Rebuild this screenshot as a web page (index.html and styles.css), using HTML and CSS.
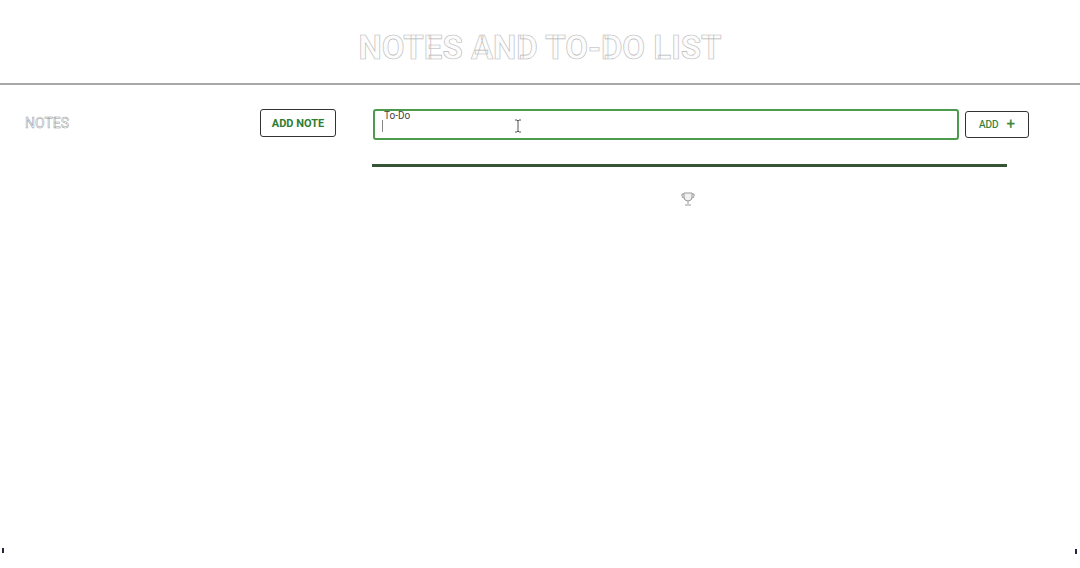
FILE: index.html
```html
<!DOCTYPE html>
<html lang="en">
<head>
<meta charset="utf-8">
<title>Notes and To-Do List</title>
<link rel="stylesheet" href="styles.css">
</head>
<body>
<header class="header">
  <h1 class="title">NOTES AND TO-DO LIST</h1>
</header>
<main class="main">
  <section class="notes">
    <div class="notes-head">
      <span class="notes-label">NOTES</span>
      <button class="btn btn-note">ADD NOTE</button>
    </div>
  </section>
  <section class="todo">
    <div class="todo-row">
      <div class="field">
        <span class="field-label">To-Do</span>
        <span class="caret"></span>
        <svg class="ibeam" width="8" height="14" viewBox="0 0 8 14"><path d="M1 1h2l1 1 1-1h2M4 2v10M1 13h2l1-1 1 1h2" fill="none" stroke="#555" stroke-width="1"/></svg>
      </div>
      <button class="btn btn-add">ADD <span class="plus">+</span></button>
    </div>
    <div class="bar"></div>
    <div class="trophy">
      <svg width="16" height="16" viewBox="0 0 16 16"><path d="M4 2h8v4a4 4 0 0 1-8 0zM4 3H2v2a2 2 0 0 0 2 2M12 3h2v2a2 2 0 0 1-2 2M8 10v3M5 14h6" fill="#f2f2f2" stroke="#9a9a9a" stroke-width="1"/></svg>
    </div>
  </section>
</main>
<span class="corner corner-l"></span>
<span class="corner corner-r"></span>
</body>
</html>
```
FILE: styles.css
```css
html, body {
  margin: 0;
  padding: 0;
  background: #fff;
  font-family: Roboto, "Liberation Sans", Arial, sans-serif;
  height: 568px;
  overflow: hidden;
  position: relative;
}
.header {
  height: 83px;
  display: flex;
  align-items: center;
  justify-content: center;
  border-bottom: 2px solid #a8a8a8;
}
.title {
  margin: 0;
  padding-top: 12px;
  font-size: 33px;
  font-weight: 700;
  letter-spacing: 0;
  color: #fcfcfc;
  -webkit-text-stroke: 0.6px #b8b8b8;
}
.main {
  display: flex;
  padding-top: 24px;
}
.notes {
  width: 336px;
  padding-left: 25px;
  box-sizing: border-box;
  margin-right: 36px;
}
.notes-head {
  display: flex;
  align-items: center;
  justify-content: space-between;
}
.notes-label {
  font-size: 14px;
  font-weight: 400;
  color: #fafafa;
  -webkit-text-stroke: 0.5px #9a9a9a;
}
.btn {
  background: #fff;
  border: 1px solid #333;
  border-radius: 3px;
  font-family: Roboto, "Liberation Sans", Arial, sans-serif;
  font-weight: 700;
  font-size: 11px;
  color: #2e7d32;
  padding: 0;
  display: flex;
  align-items: center;
  justify-content: center;
}
.btn-note {
  width: 76px;
  height: 28px;
}
.todo {
  width: 658px;
  display: flex;
  flex-direction: column;
}
.todo-row {
  display: flex;
  align-items: center;
  gap: 6px;
}
.field {
  position: relative;
  width: 586px;
  height: 31px;
  box-sizing: border-box;
  border: 2px solid #4c9a4c;
  border-radius: 3px;
  margin-left: 1px;
}
.field-label {
  position: absolute;
  left: 9px;
  top: -1px;
  font-size: 10px;
  color: #444;
}
.caret {
  position: absolute;
  left: 7px;
  top: 9px;
  width: 1px;
  height: 12px;
  background: #888;
}
.ibeam {
  position: absolute;
  left: 139px;
  top: 8px;
}
.btn-add {
  width: 64px;
  height: 27px;
  font-weight: 400;
  font-size: 10px;
  gap: 8px;
  color: #2e7d32;
  -webkit-text-stroke: 0.2px #2e7d32;
}
.plus {
  font-size: 15px;
  font-weight: 400;
  line-height: 1;
  color: #3a8a3a;
}
.bar {
  margin-top: 24px;
  width: 635px;
  height: 3px;
  background: #355535;
}
.trophy {
  width: 635px;
  display: flex;
  justify-content: center;
  padding-top: 24px;
}
.trophy svg {
  margin-left: -4px;
}
.corner {
  position: absolute;
  width: 2px;
  height: 5px;
  background: #2a2340;
  top: 548px;
}
.corner-l { left: 2px; }
.corner-r { left: 1075px; top: 549px; }
```
